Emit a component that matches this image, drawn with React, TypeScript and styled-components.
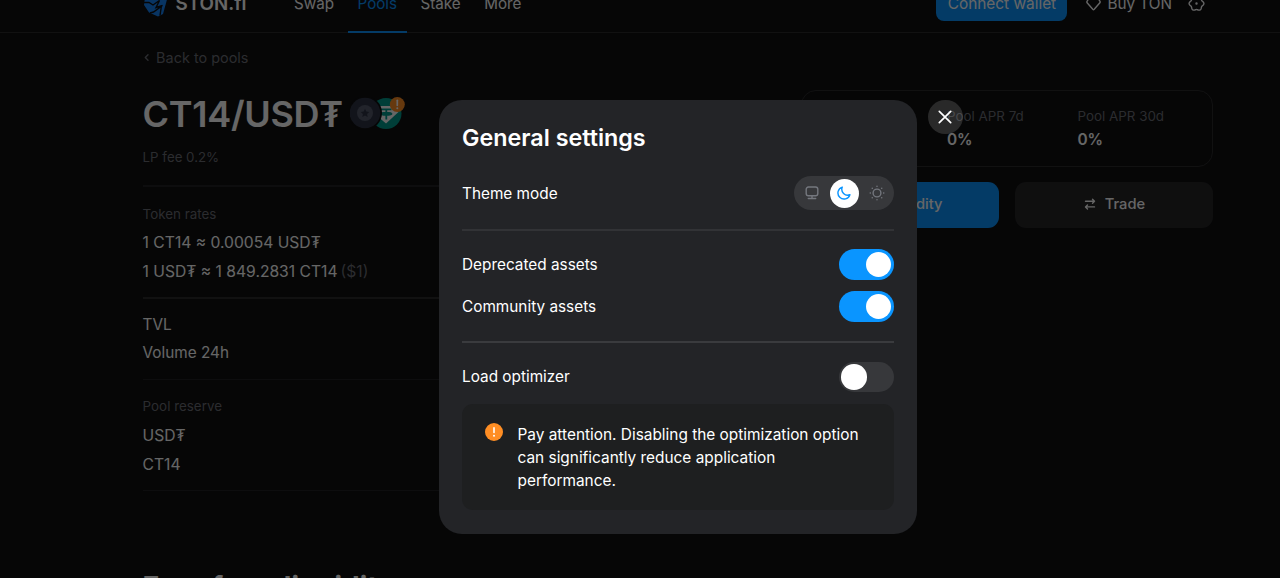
import { useState } from 'react'
import styled, { createGlobalStyle, css } from 'styled-components'

type ThemeMode = 'system' | 'dark' | 'light'

const colors = {
  background: '#0f0f10',
  text: '#ffffff',
  textSecondary: '#6c6e76',
  accent: '#0a95ff',
  border: '#2b2b2c',
  borderSoft: '#222223',
  modal: '#232427',
  modalBorder: '#3a3b3e',
  modalBorderSoft: '#323336',
  control: '#37383b',
  warning: '#ff8e24',
}

const GlobalStyle = createGlobalStyle`
  * {
    box-sizing: border-box;
  }

  body {
    margin: 0;
    height: 578px;
    overflow: hidden;
    background: ${colors.background};
    color: ${colors.text};
    font-family: Inter, 'Liberation Sans', sans-serif;
    font-size: 15.6px;
    -webkit-font-smoothing: antialiased;
  }

  button {
    margin: 0;
    padding: 0;
    border: none;
    background: none;
    color: inherit;
    font: inherit;
    cursor: pointer;
  }

  svg {
    display: block;
    flex-shrink: 0;
  }
`

const Page = styled.div`
  width: 1356px;
  height: 578px;
  overflow: hidden;
`

const Header = styled.header`
  display: flex;
  align-items: center;
  height: 57px;
  margin-top: -24px;
  padding: 0 142px;
  border-bottom: 1px solid ${colors.border};
`

const Logo = styled.div`
  display: flex;
  align-items: center;
  gap: 7.5px;
  width: 142.5px;
  padding: 0 0 1px 1px;
  font-size: 18.8px;
  font-weight: 600;
`

const Nav = styled.nav`
  display: flex;
  align-self: stretch;
  gap: 4.5px;
  height: 57px;
  flex: 1;
`

const NavItem = styled.a<{ $active?: boolean }>`
  display: flex;
  align-items: center;
  padding: 0 9.5px;
  border-bottom: 2px solid transparent;
  font-size: 15.2px;
  ${({ $active }) =>
    $active &&
    css`
      color: ${colors.accent};
      border-color: ${colors.accent};
    `}
`

const HeaderActions = styled.div`
  display: flex;
  align-items: center;
  padding: 0 9px 2px 0;
`

const ConnectButton = styled.button`
  height: 35px;
  width: 131px;
  margin-right: 19px;
  border-radius: 8px;
  background: ${colors.accent};
  font-size: 15.4px;
`

const BuyLink = styled.a`
  display: flex;
  align-items: center;
  gap: 6px;
  margin-right: 16px;
  font-size: 15.3px;
`

const Content = styled.main`
  display: flex;
  justify-content: space-between;
  padding: 15px 142.6px 0;
`

const PoolInfo = styled.div`
  width: 628px;
`

const BackLink = styled.a`
  display: flex;
  align-items: center;
  gap: 5.5px;
  height: 18px;
  color: ${colors.textSecondary};
  font-size: 14.45px;
`

const TitleRow = styled.div`
  display: flex;
  align-items: center;
  gap: 7px;
  height: 44px;
  margin-top: 26px;
`

const PoolTitle = styled.h1`
  margin: 0;
  width: 200px;
  font-size: 36px;
  font-weight: 600;
  letter-spacing: -0.3px;
  white-space: nowrap;
`

const PoolFee = styled.div`
  height: 20px;
  margin: 11px 0 18px;
  line-height: 20px;
  color: ${colors.textSecondary};
  font-size: 13.3px;
`

const Section = styled.section<{ $strong?: boolean }>`
  padding: 12px 0 11px;
  border-top: ${({ $strong }) =>
    $strong ? `2px solid ${colors.border}` : `1px solid ${colors.borderSoft}`};
`

const RatesSection = styled(Section)`
  padding: 13px 0 11px;
  border-top: 2px solid ${colors.borderSoft};
`

const VolumeSection = styled(Section)`
  padding: 11.5px 0 11px;
`

const SectionRow = styled.div`
  height: 28.5px;
  line-height: 28.5px;
  font-size: 15.65px;
`

const VolumeRow = styled(SectionRow)`
  font-size: 15.3px;
`

const SectionLabel = styled(SectionRow)`
  height: 29px;
  line-height: 28px;
  color: ${colors.textSecondary};
  font-size: 13.4px;
`

const ReserveLabel = styled(SectionLabel)`
  height: 30.5px;
  line-height: 29px;
`

const Muted = styled.span`
  margin-left: 3px;
  color: ${colors.textSecondary};
`

const EarnTitle = styled.h2`
  margin: 0;
  padding-top: 79px;
  border-top: 1px solid ${colors.borderSoft};
  font-size: 28px;
  font-weight: 700;
  letter-spacing: 0.1px;
  line-height: 34px;
`

const Sidebar = styled.aside`
  width: 412px;
  padding-top: 42px;
`

const StatsCard = styled.div`
  display: grid;
  grid-template-columns: repeat(3, 130.5px);
  height: 77px;
  padding: 15.5px 14px;
  border: 1px solid ${colors.border};
  border-radius: 15px;
`

const StatLabel = styled.div`
  height: 19px;
  line-height: 19px;
  color: ${colors.textSecondary};
  font-size: 13.4px;
`

const StatValue = styled.div`
  height: 28px;
  line-height: 27px;
  font-size: 15.4px;
  font-weight: 600;
`

const Actions = styled.div`
  display: grid;
  grid-template-columns: 1fr 1fr;
  gap: 16px;
  margin-top: 15px;
`

const ActionButton = styled.button<{ $primary?: boolean }>`
  display: flex;
  align-items: center;
  justify-content: center;
  gap: 9px;
  height: 46px;
  padding-bottom: 2px;
  border-radius: 11px;
  background: ${({ $primary }) => ($primary ? colors.accent : '#262627')};
  font-size: 14.7px;
  font-weight: 500;
`

const PrimaryButton = styled(ActionButton)`
  gap: 11px;
  padding-left: 2px;
`

const Backdrop = styled.div`
  position: fixed;
  top: 0;
  left: 0;
  display: flex;
  align-items: flex-start;
  justify-content: center;
  width: 1355.5px;
  height: 578px;
  padding-top: 99.5px;
  background: rgba(0, 0, 0, 0.6);
`

const Modal = styled.div`
  position: relative;
  width: 477.5px;
  height: 434px;
  padding: 23px;
  border-radius: 23px;
  background: ${colors.modal};
`

const CloseButton = styled.button`
  position: absolute;
  top: 0;
  right: -46px;
  display: flex;
  align-items: center;
  justify-content: center;
  width: 34.5px;
  height: 34.5px;
  border-radius: 50%;
  background: rgba(255, 255, 255, 0.14);
`

const ModalTitle = styled.h3`
  height: 30px;
  margin: 0;
  line-height: 30px;
  font-size: 23.3px;
  font-weight: 600;
`

const SettingsGroup = styled.div`
  display: flex;
  flex-direction: column;
  gap: 11.5px;
  padding: 18.5px 0 19px;

  & + & {
    padding-top: 19px;
    border-top: 2px solid ${colors.modalBorder};
  }
`

const ThemeGroup = styled.div`
  padding: 23.5px 0 18.5px;
  border-bottom: 2px solid ${colors.modalBorderSoft};
`

const SettingRow = styled.div`
  display: flex;
  align-items: center;
  justify-content: space-between;
  font-size: 15.35px;
`

const Segmented = styled.div`
  display: flex;
  align-items: center;
  justify-content: space-between;
  width: 99.5px;
  height: 34px;
  padding: 0 2.5px 0 3.5px;
  border-radius: 17px;
  background: ${colors.control};
`

const Segment = styled.button<{ $active: boolean }>`
  display: flex;
  align-items: center;
  justify-content: center;
  width: 29px;
  height: 29px;
  border-radius: 50%;
  color: ${({ $active }) => ($active ? colors.accent : '#74777e')};
  background: ${({ $active }) => ($active ? '#fff' : 'transparent')};
`

const Switch = styled.button<{ $on: boolean }>`
  display: flex;
  align-items: center;
  justify-content: ${({ $on }) => ($on ? 'flex-end' : 'flex-start')};
  width: 55px;
  height: 30.5px;
  padding: 0 2.5px;
  border-radius: 16px;
  background: ${({ $on }) => ($on ? colors.accent : colors.control)};
`

const SwitchThumb = styled.span`
  width: 25.5px;
  height: 25.5px;
  border-radius: 50%;
  background: #fff;
`

const Notice = styled.div`
  display: flex;
  align-items: flex-start;
  gap: 15px;
  height: 106px;
  padding: 19px 22.5px;
  border-radius: 11px;
  background: #1e1f20;
  line-height: 23px;
  font-size: 15.4px;
`

const IconOutline = styled.svg`
  fill: none;
  stroke: currentColor;
  stroke-width: 1.4;
  stroke-linecap: round;
  stroke-linejoin: round;
`

const StonLogo = () => (
  <svg width="25" height="26" viewBox="0 0 25 26">
    <path d="M7 1h12l5 7.5-4 14.500-5 2.500-9-4L1 14l1-7.500z" fill="#1683f5" />
    <path
      d="M0 11.500h6l4 2.500 6.500-4.500L13 16.500l6.500-2-9 6.500-3.500 1M18.500 14.500l-1.500 10"
      fill="none"
      stroke={colors.background}
      strokeWidth="1.4"
    />
  </svg>
)

const DiamondIcon = () => (
  <IconOutline width="15" height="16" viewBox="0 0 15 16">
    <path d="M3.700 2h7.600L14 6.400c.3.500.2.900-.1 1.400l-5.700 6.500c-.5.500-.9.500-1.400 0L1.100 7.800c-.3-.5-.4-.9-.1-1.400z" />
  </IconOutline>
)

// six-lobed outline around the centre dot
const gearPath = Array.from({ length: 72 }, (_, i) => {
  const angle = (i * 5 * Math.PI) / 180
  const radius = 6.7 + 0.7 * Math.cos(angle * 6)
  const x = 8.5 + radius * Math.cos(angle)
  const y = 8.5 + radius * Math.sin(angle)
  return `${i ? 'L' : 'M'}${x.toFixed(2)} ${y.toFixed(2)}`
}).join('')

const GearIcon = () => (
  <IconOutline width="17" height="17" viewBox="0 0 17 17">
    <path d={`${gearPath}z`} />
    <circle cx="8.5" cy="8.5" r=".5" fill="currentColor" />
  </IconOutline>
)

const SwapIcon = () => (
  <IconOutline width="12" height="12" viewBox="0 0 12 12">
    <path d="M1.500 3.300h9M8.500 1.300l2 2-2 2M10.500 8.900h-9M3.500 6.900l-2 2 2 2" />
  </IconOutline>
)

const PlusIcon = () => (
  <IconOutline width="11" height="11" viewBox="0 0 11 11">
    <path d="M5.500 1v9M1 5.500h9" />
  </IconOutline>
)

const ChevronIcon = () => (
  <IconOutline width="8" height="10" viewBox="0 0 8 10">
    <path d="M5 2.700 2.300 5.500 5 8.300" />
  </IconOutline>
)

const PoolTokens = () => (
  <svg width="56" height="34" viewBox="0 0 56 34">
    <circle cx="36" cy="16.5" r="15.5" fill="#009b8c" />
    <path d="M30 9h13l5.500 6L36 26.500 23 15.500z" fill="#fff" />
    <path
      d="M31 12.300h10.500M36.300 12.500v10M31 16.800c0-1.500 10.500-1.500 10.500 0s-10.500 1.500-10.500 0z"
      fill="none"
      stroke="#009b8c"
      strokeWidth="1.8"
    />
    <circle cx="15" cy="16" r="17" fill={colors.background} />
    <circle cx="15" cy="16" r="15.3" fill="#2d3345" />
    <circle cx="15" cy="16" r="8" fill="#555b6c" />
    <path
      d="m15 11.800 1.300 2.700 3 .4-2.200 2.100.6 3-2.700-1.500-2.700 1.500.6-3-2.200-2.100 3-.4z"
      fill="#2d3345"
    />
    <circle cx="47.3" cy="7.5" r="7.5" fill={colors.warning} />
    <path d="M47.300 3.300v5" stroke="#fff" strokeWidth="1.7" strokeLinecap="round" />
    <circle cx="47.3" cy="11.2" r="1" fill="#fff" />
  </svg>
)

const MonitorIcon = () => (
  <IconOutline width="14" height="14" viewBox="0 0 14 14">
    <rect x="1.2" y="1" width="11.6" height="8.8" rx="2.2" />
    <path d="M7 10v2.400M3.300 12.500h7.400" />
  </IconOutline>
)

const MoonIcon = () => (
  <IconOutline width="14" height="14" viewBox="0 0 14 14">
    <path d="M5.300 1.100A6.100 6.100 0 1 0 12.900 8.700 5.800 5.800 0 0 1 5.300 1.100z" />
  </IconOutline>
)

const SunIcon = () => (
  <IconOutline width="16" height="16" viewBox="0 0 16 16">
    <circle cx="8" cy="8" r="3.9" />
    <path d="M8 1.200v.2M8 14.600v.2M1.200 8h.2M14.600 8h.2M3.200 3.200l.1.100M12.700 12.700l.1.100M3.200 12.800l.1-.1M12.700 3.300l.1-.1" />
  </IconOutline>
)

const CloseIcon = () => (
  <svg width="14" height="14" viewBox="0 0 14 14">
    <path
      d="m1.300 1.300 11.400 11.400M12.700 1.300 1.300 12.700"
      stroke="#fff"
      strokeWidth="1.7"
      strokeLinecap="round"
    />
  </svg>
)

const WarningIcon = () => (
  <svg width="18" height="18" viewBox="0 0 18 18">
    <circle cx="9" cy="9" r="9" fill={colors.warning} />
    <path d="M9 4.900v4.600" stroke="#fff" strokeWidth="1.6" strokeLinecap="round" />
    <circle cx="9" cy="12.7" r="1" fill="#fff" />
  </svg>
)

const themeModes: { mode: ThemeMode; Icon: () => React.ReactNode }[] = [
  { mode: 'system', Icon: MonitorIcon },
  { mode: 'dark', Icon: MoonIcon },
  { mode: 'light', Icon: SunIcon },
]

const stats = [
  { label: 'Pool APR 24h', value: '0%' },
  { label: 'Pool APR 7d', value: '0%' },
  { label: 'Pool APR 30d', value: '0%' },
]

const SwitchRow = ({ label, initial }: { label: string; initial: boolean }) => {
  const [on, setOn] = useState(initial)

  return (
    <SettingRow>
      {label}
      <Switch
        role="switch"
        aria-checked={on}
        aria-label={label}
        $on={on}
        onClick={() => setOn(!on)}
      >
        <SwitchThumb />
      </Switch>
    </SettingRow>
  )
}

const SettingsModal = ({ onClose }: { onClose: () => void }) => {
  const [themeMode, setThemeMode] = useState<ThemeMode>('dark')

  return (
    <Backdrop>
      <Modal role="dialog" aria-label="General settings">
        <CloseButton aria-label="Close" onClick={onClose}>
          <CloseIcon />
        </CloseButton>
        <ModalTitle>General settings</ModalTitle>
        <ThemeGroup>
          <SettingRow>
            Theme mode
            <Segmented>
              {themeModes.map(({ mode, Icon }) => (
                <Segment
                  key={mode}
                  aria-label={mode}
                  $active={mode === themeMode}
                  onClick={() => setThemeMode(mode)}
                >
                  <Icon />
                </Segment>
              ))}
            </Segmented>
          </SettingRow>
        </ThemeGroup>
        <SettingsGroup>
          <SwitchRow label="Deprecated assets" initial />
          <SwitchRow label="Community assets" initial />
        </SettingsGroup>
        <SettingsGroup>
          <SwitchRow label="Load optimizer" initial={false} />
          <Notice>
            <WarningIcon />
            <span>
              Pay attention. Disabling the optimization option can significantly
              reduce application performance.
            </span>
          </Notice>
        </SettingsGroup>
      </Modal>
    </Backdrop>
  )
}

export default function App() {
  const [settingsOpen, setSettingsOpen] = useState(true)

  return (
    <>
      <GlobalStyle />
      <Page>
        <Header>
          <Logo>
            <StonLogo />
            STON.fi
          </Logo>
          <Nav>
            <NavItem>Swap</NavItem>
            <NavItem $active>Pools</NavItem>
            <NavItem>Stake</NavItem>
            <NavItem>More</NavItem>
          </Nav>
          <HeaderActions>
            <ConnectButton>Connect wallet</ConnectButton>
            <BuyLink>
              <DiamondIcon />
              Buy TON
            </BuyLink>
            <button aria-label="Settings" onClick={() => setSettingsOpen(true)}>
              <GearIcon />
            </button>
          </HeaderActions>
        </Header>
        <Content>
          <PoolInfo>
            <BackLink>
              <ChevronIcon />
              Back to pools
            </BackLink>
            <TitleRow>
              <PoolTitle>CT14/USD₮</PoolTitle>
              <PoolTokens />
            </TitleRow>
            <PoolFee>LP fee 0.2%</PoolFee>
            <RatesSection>
              <SectionLabel>Token rates</SectionLabel>
              <SectionRow>1 CT14 ≈ 0.00054 USD₮</SectionRow>
              <SectionRow>
                1 USD₮ ≈ 1 849.2831 CT14<Muted>($1)</Muted>
              </SectionRow>
            </RatesSection>
            <VolumeSection $strong>
              <VolumeRow>TVL</VolumeRow>
              <VolumeRow>Volume 24h</VolumeRow>
            </VolumeSection>
            <Section>
              <ReserveLabel>Pool reserve</ReserveLabel>
              <SectionRow>USD₮</SectionRow>
              <SectionRow>CT14</SectionRow>
            </Section>
            <EarnTitle>Earn from liquidity</EarnTitle>
          </PoolInfo>
          <Sidebar>
            <StatsCard>
              {stats.map(({ label, value }) => (
                <div key={label}>
                  <StatLabel>{label}</StatLabel>
                  <StatValue>{value}</StatValue>
                </div>
              ))}
            </StatsCard>
            <Actions>
              <PrimaryButton $primary>
                <PlusIcon />
                Liquidity
              </PrimaryButton>
              <ActionButton>
                <SwapIcon />
                Trade
              </ActionButton>
            </Actions>
          </Sidebar>
        </Content>
      </Page>
      {settingsOpen && <SettingsModal onClose={() => setSettingsOpen(false)} />}
    </>
  )
}
